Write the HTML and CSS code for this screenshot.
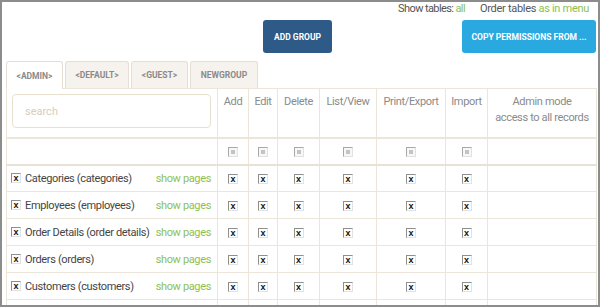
FILE: index.html
```html
<!DOCTYPE html>
<html>
  <head>
    <meta charset="UTF-8">
    <title>Group permissions</title>
    <link rel="stylesheet" href="styles.css">
  </head>
  <body>
    <div class="frame">
      <div class="options">
        <span class="opt-show">Show tables: <a class="link">all</a></span>
        <span>Order tables <a class="link">as in menu</a></span>
      </div>

      <div class="actions">
        <button class="btn btn-dark">ADD GROUP</button>
        <button class="btn btn-light">COPY PERMISSIONS FROM ...</button>
      </div>

      <!-- Group tabs -->
      <ul class="tabs">
        <li class="tab active">&lt;ADMIN&gt;</li>
        <li class="tab">&lt;DEFAULT&gt;</li>
        <li class="tab">&lt;GUEST&gt;</li>
        <li class="tab">NEWGROUP</li>
      </ul>

      <table class="perms">
        <colgroup>
          <col style="width: 211px">
          <col style="width: 31px">
          <col style="width: 29px">
          <col style="width: 42px">
          <col style="width: 57px">
          <col style="width: 69px">
          <col style="width: 42px">
          <col style="width: 109px">
        </colgroup>
        <thead>
          <tr class="head-row">
            <th class="search-cell"><input type="text" class="search" placeholder="search"></th>
            <th>Add</th>
            <th>Edit</th>
            <th>Delete</th>
            <th>List/View</th>
            <th>Print/Export</th>
            <th>Import</th>
            <th>Admin mode<br>access to all records</th>
          </tr>
          <tr class="all-row">
            <td></td>
            <td><span class="cb off"></span></td>
            <td><span class="cb off"></span></td>
            <td><span class="cb off"></span></td>
            <td><span class="cb off"></span></td>
            <td><span class="cb off"></span></td>
            <td><span class="cb off"></span></td>
            <td></td>
          </tr>
        </thead>
        <tbody id="rows"></tbody>
      </table>
    </div>

    <script>
      const tables = [
        "Categories (categories)",
        "Employees (employees)",
        "Order Details (order details)",
        "Orders (orders)",
        "Customers (customers)",
        "Products (products)"
      ];

      const rows = document.getElementById("rows");
      tables.forEach((name) => {
        const tr = document.createElement("tr");
        let html = `<td><div class="name-cell"><span class="cb">x</span><span class="name">${name}</span><a class="link">show pages</a></div></td>`;
        for (let i = 0; i < 6; i++) {
          html += `<td><span class="cb">x</span></td>`;
        }
        html += `<td></td>`;
        tr.innerHTML = html;
        rows.appendChild(tr);
      });
    </script>
  </body>
</html>
```

FILE: styles.css
```css
html, body {
  margin: 0;
  padding: 0;
}
body {
  font-family: Roboto, "Liberation Sans", Arial, sans-serif;
  background-color: #fff;
}
.frame {
  height: 307px;
  box-sizing: border-box;
  border: 2px solid #8c8c8c;
  padding: 0 2px 0 4px;
  overflow: hidden;
}
.options {
  display: flex;
  justify-content: flex-end;
  gap: 15px;
  font-size: 11px;
  letter-spacing: -0.3px;
  line-height: 14px;
  color: #555;
  padding: 0 7px 0 0;
}
.opt-show {
  letter-spacing: -0.6px;
}
.link {
  color: #8cc152;
  text-decoration: none;
  cursor: pointer;
}
.actions {
  display: flex;
  justify-content: flex-end;
  gap: 130px;
  margin-top: 4px;
}
.btn {
  height: 33px;
  border: none;
  border-radius: 3px;
  color: #fff;
  font-family: Roboto, "Liberation Sans", Arial, sans-serif;
  font-size: 8.5px;
  font-weight: bold;
  cursor: pointer;
}
.btn-dark {
  width: 69px;
  background-color: #2e5a87;
}
.btn-light {
  width: 134px;
  background-color: #29a9e0;
}
.tabs {
  list-style: none;
  display: flex;
  gap: 2px;
  margin: 8px 0 0 0;
  padding: 0;
}
.tab {
  height: 27px;
  box-sizing: border-box;
  border: 1px solid #e6ded2;
  border-bottom: none;
  border-radius: 3px 3px 0 0;
  background-color: #f6f3ee;
  color: #8a8a8a;
  font-size: 8.5px;
  font-weight: bold;
  display: flex;
  align-items: center;
  justify-content: center;
}
.tab:nth-child(1) { width: 57px; }
.tab:nth-child(2) { width: 64px; }
.tab:nth-child(3) { width: 57px; }
.tab:nth-child(4) { width: 68px; }
.tab.active {
  background-color: #fff;
  height: 28px;
  margin-bottom: -1px;
  position: relative;
}
.perms {
  width: 590px;
  table-layout: fixed;
  border-collapse: collapse;
  border: 1px solid #e6ded2;
  font-size: 11px;
  letter-spacing: -0.35px;
}
.perms th,
.perms td {
  border: 1px solid #ebe5da;
  padding: 0;
  text-align: center;
}
.head-row {
  height: 49px;
}
.head-row th {
  vertical-align: top;
  font-weight: normal;
  color: #8a8a8a;
  line-height: 16px;
  padding-top: 5px;
  border-bottom: 2px solid #ebe5da;
}
.head-row th.search-cell {
  padding: 5px 6px 8px 5px;
}
.search {
  display: block;
  width: 100%;
  height: 34px;
  box-sizing: border-box;
  border: 1px solid #e8dfcf;
  border-radius: 4px;
  padding: 0 12px;
  font-family: Roboto, "Liberation Sans", Arial, sans-serif;
  font-size: 11px;
  outline: none;
}
.search::placeholder {
  color: #dacdb9;
}
.all-row {
  height: 27px;
}
.all-row td {
  border-bottom: 2px solid #e8e1d5;
}
.perms tbody tr {
  height: 27px;
}
.name-cell {
  display: flex;
  align-items: center;
  padding: 0 6px 0 4px;
  color: #444;
  white-space: nowrap;
}
.name-cell .name {
  margin-left: 4px;
  flex: 1;
  text-align: left;
}
.cb {
  display: inline-block;
  width: 10px;
  height: 10px;
  box-sizing: border-box;
  border-top: 1px solid #8f8f8f;
  border-left: 1px solid #8f8f8f;
  border-right: 1px solid #e2e2e2;
  border-bottom: 1px solid #e2e2e2;
  background-color: #fff;
  color: #111;
  font-family: "Liberation Sans", Arial, sans-serif;
  font-size: 9px;
  font-weight: bold;
  letter-spacing: 0;
  line-height: 8px;
  text-align: center;
  vertical-align: middle;
}
.cb.off {
  background-color: #f7f7f7;
  border-top-color: #a8a8a8;
  border-left-color: #a8a8a8;
  position: relative;
}
.cb.off::after {
  content: "";
  position: absolute;
  left: 2px;
  top: 2px;
  width: 4px;
  height: 4px;
  background-color: #c4c4c4;
}
```
